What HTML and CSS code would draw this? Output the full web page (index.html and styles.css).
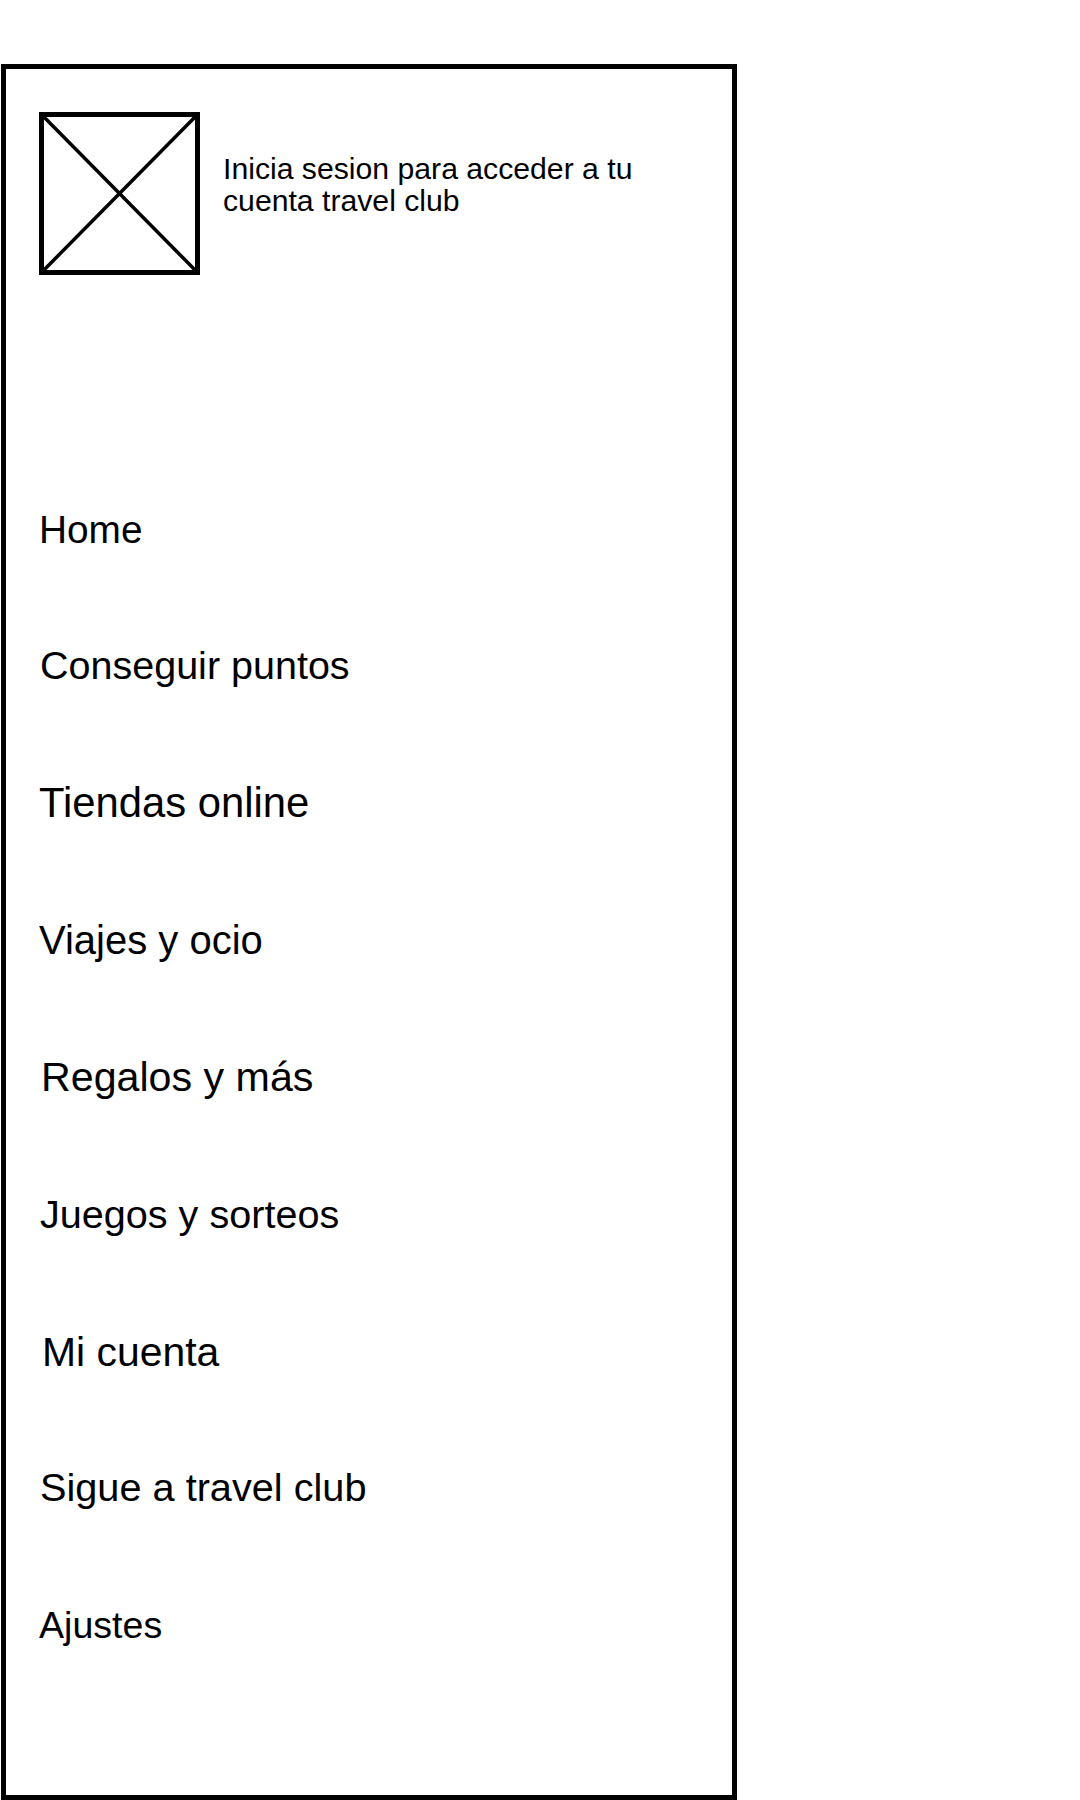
FILE: index.html
```html
<!DOCTYPE html>
<html lang="es">
<head>
    <meta charset="UTF-8">
    <title>Menu travel club</title>
    <link rel="stylesheet" href="styles.css">
</head>
<body>
<div class="menu">
    <div class="login">
        <svg class="avatar" width="161" height="163" viewBox="0 0 161 163">
            <rect x="2.5" y="2.5" width="156" height="158" fill="none" stroke="#000" stroke-width="5"/>
            <path d="M3 3 L158 160 M158 3 L3 160" fill="none" stroke="#000" stroke-width="3.5"/>
        </svg>
        <p class="login-text">Inicia sesion para acceder a tu cuenta travel club</p>
    </div>
    <ul class="items">
        <li class="item-home">Home</li>
        <li class="item-puntos">Conseguir puntos</li>
        <li class="item-tiendas">Tiendas online</li>
        <li class="item-viajes">Viajes y ocio</li>
        <li class="item-regalos">Regalos y más</li>
        <li class="item-juegos">Juegos y sorteos</li>
        <li class="item-cuenta">Mi cuenta</li>
        <li class="item-sigue">Sigue a travel club</li>
        <li class="item-ajustes">Ajustes</li>
    </ul>
</div>
</body>
</html>
```

FILE: styles.css
```css
body {
  margin: 0;
  background: #fff;
  font-family: "Liberation Sans", Arial, sans-serif;
  color: #000;
}
.menu {
  box-sizing: border-box;
  width: 736px;
  height: 1736px;
  margin: 64px 0 0 1px;
  border: 5px solid #000;
  padding: 43px 36px 0 33px;
}
.login {
  display: flex;
  align-items: flex-start;
  gap: 23px;
}
.avatar {
  flex-shrink: 0;
}
.login-text {
  margin: 41px 0 0;
  width: 430px;
  font-size: 30.2px;
  line-height: 32px;
}
.items {
  list-style: none;
  margin: 233px 0 0;
  padding: 0;
}
.items li {
  height: 137.25px;
  line-height: 44px;
}
.items .item-home { height: 135.25px; }
.items .item-cuenta { height: 135px; }
.items .item-sigue { height: 138px; }
.item-home { font-size: 38.8px; }
.item-puntos { font-size: 39.5px; padding-left: 1px; }
.item-tiendas { font-size: 41.8px; }
.item-viajes { font-size: 40px; }
.item-regalos { font-size: 41.2px; padding-left: 2px; }
.item-juegos { font-size: 39.6px; padding-left: 1px; }
.item-cuenta { font-size: 40.9px; padding-left: 3px; }
.item-sigue { font-size: 39.7px; padding-left: 1px; }
.item-ajustes { font-size: 37.6px; }
```
